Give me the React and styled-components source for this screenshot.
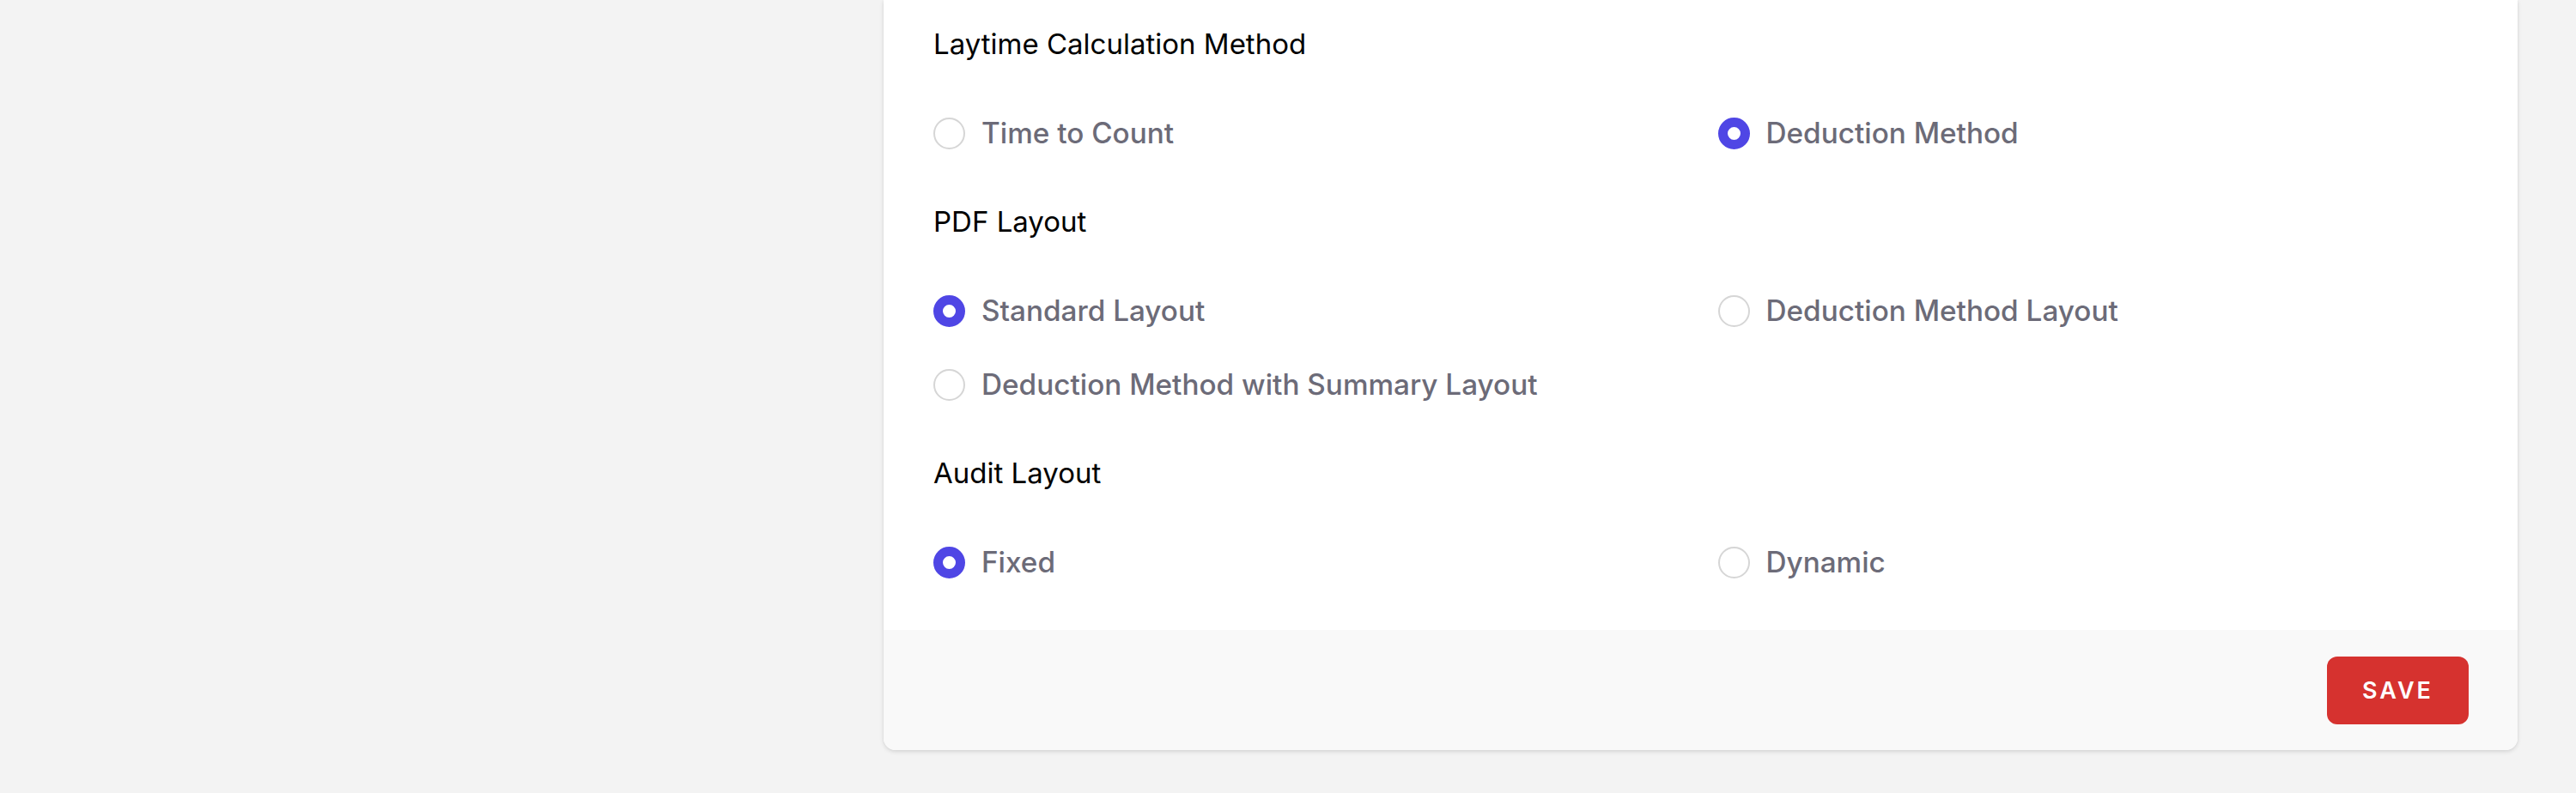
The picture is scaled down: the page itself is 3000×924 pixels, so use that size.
import React, { useState } from "react";
import styled, { createGlobalStyle } from "styled-components";

const GlobalStyle = createGlobalStyle`
  html, body {
    margin: 0;
    padding: 0;
    background: #f3f3f3;
    font-family: Inter, "Noto Sans", "Liberation Sans", sans-serif;
  }
  * {
    box-sizing: border-box;
  }
`;

const Page = styled.div`
  display: grid;
  grid-template-columns: 1029px 1fr;
  min-height: 924px;
  background: #f3f3f3;
`;

const Aside = styled.div``;

const Main = styled.main`
  padding: 0 68px 51px 0;
`;

const Card = styled.section`
  background: #ffffff;
  border-radius: 0 0 14px 14px;
  box-shadow: 0 2px 5px rgba(0, 0, 0, 0.12), 0 0 3px rgba(0, 0, 0, 0.05);
  overflow: hidden;
`;

const Body = styled.div`
  padding: 27px 58px 55px;
`;

const Section = styled.div`
  & + & {
    margin-top: 55px;
  }
`;

const Heading = styled.h3`
  margin: 0 0 56px;
  height: 48px;
  line-height: 48px;
  font-size: 33px;
  font-weight: 400;
  color: #000000;
`;

const Options = styled.div`
  display: grid;
  grid-template-columns: 1fr 1fr;
  column-gap: 40px;
  row-gap: 38px;
`;

const Option = styled.label`
  display: flex;
  align-items: center;
  gap: 19px;
  height: 48px;
  cursor: pointer;
`;

const Circle = styled.span`
  flex: none;
  width: 37px;
  height: 37px;
  border-radius: 50%;
  background: #ffffff;
  border: ${(p) => (p.$checked ? "11px solid #4f46e5" : "2px solid #d6d6d6")};
`;

const Label = styled.span`
  font-size: 33.3px;
  font-weight: 500;
  color: #6c6b78;
  white-space: nowrap;
`;

const Footer = styled.div`
  display: flex;
  justify-content: flex-end;
  align-items: center;
  height: 140px;
  padding: 0 57px;
  background: #f9f9f9;
`;

const SaveButton = styled.button`
  width: 165px;
  height: 79px;
  border: none;
  border-radius: 12px;
  background: #d6322f;
  color: #ffffff;
  font-family: Inter, "Liberation Sans", sans-serif;
  font-size: 27px;
  font-weight: 600;
  letter-spacing: 3px;
  cursor: pointer;
`;

const sections = [
  {
    key: "laytime",
    title: "Laytime Calculation Method",
    options: ["Time to Count", "Deduction Method"],
    initial: "Deduction Method",
  },
  {
    key: "pdf",
    title: "PDF Layout",
    options: [
      "Standard Layout",
      "Deduction Method Layout",
      "Deduction Method with Summary Layout",
    ],
    initial: "Standard Layout",
  },
  {
    key: "audit",
    title: "Audit Layout",
    options: ["Fixed", "Dynamic"],
    initial: "Fixed",
  },
];

const RadioGroup = ({ title, options, value, onChange }) => (
  <Section>
    <Heading>{title}</Heading>
    <Options>
      {options.map((opt) => (
        <Option key={opt} onClick={() => onChange(opt)}>
          <Circle $checked={value === opt} />
          <Label>{opt}</Label>
        </Option>
      ))}
    </Options>
  </Section>
);

const App = () => {
  const [values, setValues] = useState(
    Object.fromEntries(sections.map((s) => [s.key, s.initial]))
  );

  return (
    <>
      <GlobalStyle />
      <Page>
        <Aside />
        <Main>
          <Card>
            <Body>
              {sections.map((s) => (
                <RadioGroup
                  key={s.key}
                  title={s.title}
                  options={s.options}
                  value={values[s.key]}
                  onChange={(v) => setValues({ ...values, [s.key]: v })}
                />
              ))}
            </Body>
            <Footer>
              <SaveButton>SAVE</SaveButton>
            </Footer>
          </Card>
        </Main>
      </Page>
    </>
  );
};

export default App;
